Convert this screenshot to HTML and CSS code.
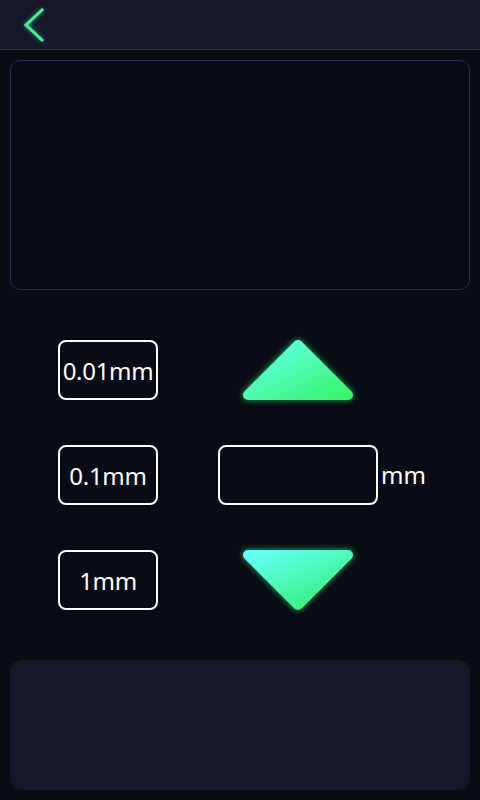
FILE: index.html
```html
<!DOCTYPE html>
<html>
<head>
<meta charset="utf-8">
<link rel="stylesheet" href="styles.css">
</head>
<body>
<header class="topbar">
  <svg class="back" width="24" height="36" viewBox="0 0 24 36">
    <polyline points="19,3 3,18 19,33" fill="none" stroke="#3df59a" stroke-width="3" stroke-linecap="square" stroke-linejoin="miter"/>
  </svg>
</header>
<main class="page">
  <section class="display"></section>
  <section class="controls">
    <button class="step">0.01mm</button>
    <div class="arrow">
      <svg width="110" height="60" viewBox="0 0 110 60">
        <defs>
          <linearGradient id="gu" x1="0" y1="0" x2="1" y2="1">
            <stop offset="0" stop-color="#62fff4"/>
            <stop offset="1" stop-color="#38f56a"/>
          </linearGradient>
        </defs>
        <polygon points="55,5 105,55 5,55" fill="url(#gu)" stroke="url(#gu)" stroke-width="10" stroke-linejoin="round"/>
      </svg>
    </div>
    <button class="step">0.1mm</button>
    <div class="value">
      <div class="input"></div>
      <span class="unit">mm</span>
    </div>
    <button class="step">1mm</button>
    <div class="arrow">
      <svg width="110" height="60" viewBox="0 0 110 60">
        <defs>
          <linearGradient id="gd" x1="0" y1="0" x2="0.8" y2="1">
            <stop offset="0" stop-color="#62fff8"/>
            <stop offset="1" stop-color="#38f07a"/>
          </linearGradient>
        </defs>
        <polygon points="5,5 105,5 55,55" fill="url(#gd)" stroke="url(#gd)" stroke-width="10" stroke-linejoin="round"/>
      </svg>
    </div>
  </section>
  <section class="footer-panel"></section>
</main>
</body>
</html>
```
FILE: styles.css
```css
* { box-sizing: border-box; }
html, body {
  margin: 0;
  padding: 0;
  background: #090c14;
  font-family: "Noto Sans", "Open Sans", sans-serif;
  color: #ffffff;
}
.topbar {
  height: 50px;
  background: #161929;
  border-bottom: 1px solid #2b3150;
  display: flex;
  align-items: center;
  padding-left: 23px;
}
.back {
  display: block;
  filter: drop-shadow(0 0 2px rgba(61, 245, 154, 0.6));
}
.page {
  padding: 10px 10px 10px;
  display: flex;
  flex-direction: column;
}
.display {
  height: 230px;
  border: 1px solid #262d58;
  border-radius: 10px;
  background: #080b13;
}
.controls {
  margin-top: 50px;
  display: grid;
  grid-template-columns: 100px 160px;
  grid-auto-rows: 60px;
  column-gap: 60px;
  row-gap: 45px;
  padding-left: 48px;
}
.step {
  width: 100px;
  height: 60px;
  border: 2px solid #ffffff;
  border-radius: 8px;
  background: transparent;
  color: #ffffff;
  font-family: "Noto Sans", "Open Sans", sans-serif;
  font-size: 24px;
  padding: 0;
  display: flex;
  align-items: center;
  justify-content: center;
  letter-spacing: -0.3px;
}
.arrow {
  display: flex;
  align-items: center;
  justify-content: center;
}
.arrow svg {
  display: block;
  filter: drop-shadow(0 0 3px rgba(60, 245, 120, 0.7));
}
.value {
  display: flex;
  align-items: center;
  position: relative;
}
.input {
  width: 160px;
  height: 60px;
  border: 2px solid #ffffff;
  border-radius: 8px;
}
.unit {
  position: absolute;
  left: 163px;
  top: 50%;
  transform: translateY(-50%);
  font-size: 24px;
  line-height: 1;
}
.footer-panel {
  margin-top: 50px;
  height: 130px;
  background: #151828;
  border-radius: 12px;
}
```
